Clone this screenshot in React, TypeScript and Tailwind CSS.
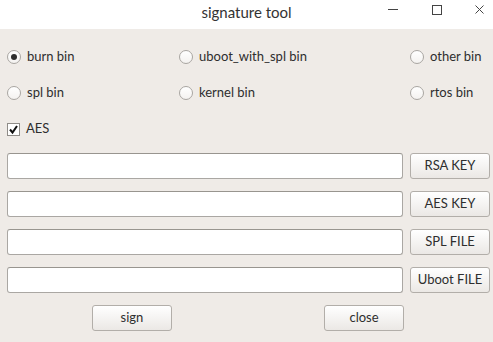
import React, { useState } from 'react';

const Radio = ({ label, checked, onClick }: { label: string; checked?: boolean; onClick: () => void }) => (
  <button onClick={onClick} className="flex items-center gap-[6px] text-left">
    <span className="w-[14px] h-[14px] rounded-full border border-[#a9a6a2] bg-gradient-to-b from-white to-[#f4f2f0] flex items-center justify-center">
      {checked && <span className="w-[6px] h-[6px] rounded-full bg-[#2e2e2e]" />}
    </span>
    <span>{label}</span>
  </button>
);

const Btn = ({ children, className = '' }: { children: React.ReactNode; className?: string }) => (
  <button
    className={`h-[26px] w-[80px] rounded-[3px] border border-[#b2aea9] bg-gradient-to-b from-white to-[#ebe8e5] text-[#2e2e2e] ${className}`}
  >
    {children}
  </button>
);

export default function App() {
  const [mode, setMode] = useState('burn');
  const [aes, setAes] = useState(true);
  const fields = ['RSA KEY', 'AES KEY', 'SPL FILE', 'Uboot FILE'];

  return (
    <div className="w-[493px] h-[342px] bg-[#efebe7] text-[13px] text-[#2e2e2e] font-['Lato','Noto_Sans',sans-serif] flex flex-col overflow-hidden">
      {/* title bar */}
      <div className="h-[29px] bg-white relative flex items-center justify-center">
        <span className="text-[15px] text-[#333] -mt-[5px]">signature tool</span>
        <svg className="absolute right-0 top-0" width="120" height="29" viewBox="0 0 120 29">
          <line x1="15" y1="9.5" x2="25" y2="9.5" stroke="#444" strokeWidth="1" />
          <rect x="59.5" y="5.5" width="9" height="9" fill="none" stroke="#444" strokeWidth="1" />
          <path d="M102.5 5.5 L110.5 13.5 M110.5 5.5 L102.5 13.5" stroke="#444" strokeWidth="1" />
        </svg>
      </div>

      <div className="pl-[7px] pr-[3px] flex flex-col">
        <div className="grid grid-cols-[172px_231px_1fr] auto-rows-[36px] items-center mt-[10px]">
          <Radio label="burn bin" checked={mode === 'burn'} onClick={() => setMode('burn')} />
          <Radio label="uboot_with_spl bin" checked={mode === 'uboot'} onClick={() => setMode('uboot')} />
          <Radio label="other bin" checked={mode === 'other'} onClick={() => setMode('other')} />
          <Radio label="spl bin" checked={mode === 'spl'} onClick={() => setMode('spl')} />
          <Radio label="kernel bin" checked={mode === 'kernel'} onClick={() => setMode('kernel')} />
          <Radio label="rtos bin" checked={mode === 'rtos'} onClick={() => setMode('rtos')} />
        </div>

        <div className="h-[36px] flex items-center">
          <button onClick={() => setAes(!aes)} className="flex items-center gap-[6px] text-left">
            <span className="w-[13px] h-[13px] border border-[#8f8c88] bg-white flex items-center justify-center">
              {aes && (
                <svg width="11" height="11" viewBox="0 0 11 11">
                  <path d="M2 5.5 L4.5 8.5 L9 2" fill="none" stroke="#111" strokeWidth="2" />
                </svg>
              )}
            </span>
            <span>AES</span>
          </button>
        </div>

        <div className="flex flex-col gap-[12px] mt-[6px]">
          {fields.map(f => (
            <div key={f} className="flex items-center gap-[7px]">
              <input className="h-[26px] w-[396px] rounded-[3px] border border-[#aaa7a3] border-t-[#98958f] bg-white px-1 outline-none" />
              <Btn>{f}</Btn>
            </div>
          ))}
        </div>

        <div className="flex mt-[12px]">
          <Btn className="ml-[85px]">sign</Btn>
          <Btn className="ml-[152px]">close</Btn>
        </div>
      </div>
    </div>
  );
}
